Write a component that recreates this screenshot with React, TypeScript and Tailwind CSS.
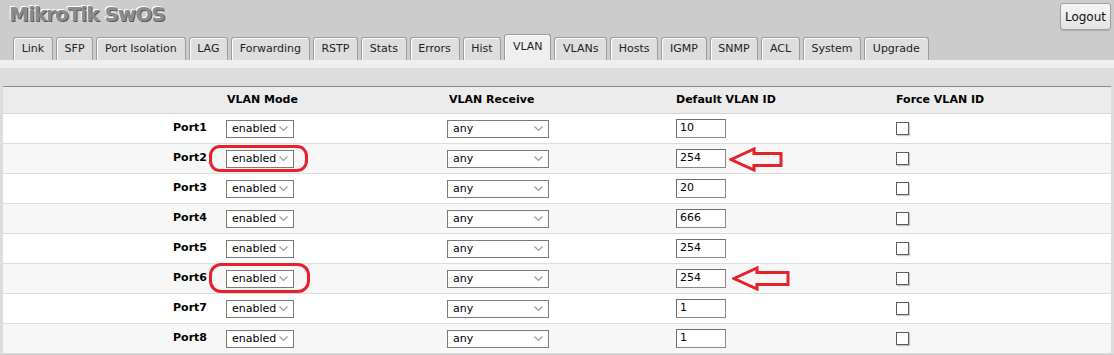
const tabs = [
  "Link",
  "SFP",
  "Port Isolation",
  "LAG",
  "Forwarding",
  "RSTP",
  "Stats",
  "Errors",
  "Hist",
  "VLAN",
  "VLANs",
  "Hosts",
  "IGMP",
  "SNMP",
  "ACL",
  "System",
  "Upgrade",
];

const ports = [
  { name: "Port1", vid: "10" },
  { name: "Port2", vid: "254", mark: "a" },
  { name: "Port3", vid: "20" },
  { name: "Port4", vid: "666" },
  { name: "Port5", vid: "254" },
  { name: "Port6", vid: "254", mark: "b" },
  { name: "Port7", vid: "1" },
  { name: "Port8", vid: "1" },
];

const Chevron = () => (
  <svg width="9" height="5" viewBox="0 0 9 5" className="shrink-0">
    <path d="M0.5 0.5 L4.5 4.5 L8.5 0.5" fill="none" stroke="#9a9a9a" strokeWidth="1.1" />
  </svg>
);

const FakeSelect = ({ value, width }: { value: string; width: string }) => (
  <div
    className={`${width} h-[18px] flex items-center justify-between border border-[#7a7a7a] bg-white pl-[5px] pr-[5px] text-[11px] text-black`}
  >
    <span className="leading-none">{value}</span>
    <Chevron />
  </div>
);

const Arrow = ({ w, h }: { w: number; h: number }) => {
  const mid = h / 2;
  const head = 25;
  return (
    <svg width={w} height={h} viewBox={`0 0 ${w} ${h}`}>
      <polygon
        points={`2,${mid} ${head},2 ${head},${mid - 6} ${w - 2},${mid - 6} ${w - 2},${mid + 6} ${head},${mid + 6} ${head},${h - 2}`}
        fill="none"
        stroke="#e8202a"
        strokeWidth="3"
        strokeLinejoin="miter"
      />
    </svg>
  );
};

export default function App() {
  return (
    <div className="min-h-screen bg-[#cccccc] font-['DejaVu_Sans',sans-serif] text-black">
      <div className="flex justify-between h-[34px] pl-[9px] pr-[3px] pt-[3px]">
        <div className="text-[20px] font-bold tracking-[-1px] leading-[22px] text-[#8c8c8c] [text-shadow:1px_1px_0_#5a5a5a,-1px_-1px_0_#ffffff]">
          MikroTik SwOS
        </div>
        <button className="h-[27px] px-[4px] border border-[#a0a0a0] rounded-[3px] bg-gradient-to-b from-[#f6f6f6] to-[#e2e2e2] text-[12px] text-[#111] shadow-[0_1px_1px_rgba(0,0,0,0.15)]">
          Logout
        </button>
      </div>

      <div className="flex items-end gap-[3px] pl-[13px] h-[26px]">
        {tabs.map((t) => {
          const active = t === "VLAN";
          return (
            <div
              key={t}
              className={`flex items-center px-[7.7px] border border-b-0 border-[#9c9c9c] rounded-t-[3px] shadow-[inset_1px_1px_0_#ffffff] text-[11px] text-[#222] ${
                active ? "h-[26px] bg-[#efefef]" : "h-[23px] bg-[#dedede]"
              }`}
            >
              {t}
            </div>
          );
        })}
      </div>

      <div className="h-[8px] bg-[#efefef]" />
      <div className="h-[18px] bg-[#dcdcdc]" />

      <div className="bg-[#dcdcdc] px-[3px]">
        <div className="border-t border-[#888888]">
          <div className="grid grid-cols-[219px_221px_229px_220px_1fr] h-[27px] items-center bg-[#ececec] border-b border-[#d6d6d6] text-[11px] font-bold">
            <div />
            <div className="pl-[5px]">VLAN Mode</div>
            <div className="pl-[6px]">VLAN Receive</div>
            <div className="pl-[4px]">Default VLAN ID</div>
            <div className="pl-[4px]">Force VLAN ID</div>
          </div>

          {ports.map((p, i) => (
            <div
              key={p.name}
              className={`relative grid grid-cols-[219px_221px_229px_220px_1fr] h-[30px] items-center border-b border-[#dcdcdc] ${
                i % 2 === 0 ? "bg-white" : "bg-[#f7f7f7]"
              }`}
            >
              <div className="text-right pr-[15px] text-[11px] font-bold">{p.name}</div>
              <div className="pl-[4px]">
                <FakeSelect value="enabled" width="w-[68px]" />
              </div>
              <div className="pl-[4px]">
                <FakeSelect value="any" width="w-[102px]" />
              </div>
              <div className="pl-[4px]">
                <div className="w-[50px] h-[19px] flex items-center bg-white border border-[#8a8a8a] border-t-[#6e6e6e] border-l-[#6e6e6e] pl-[3px] text-[11px]">
                  {p.vid}
                </div>
              </div>
              <div className="pl-[4px]">
                <div className="w-[13px] h-[13px] bg-white border border-[#5c5c5c] shadow-[1px_1px_1px_rgba(0,0,0,0.2)]" />
              </div>

              {p.mark === "a" && (
                <>
                  <div className="absolute left-[206px] top-[1px] w-[99px] h-[27px] border-[3px] border-[#e8202a] rounded-[11px]" />
                  <div className="absolute left-[726px] top-[3px]">
                    <Arrow w={54} h={25} />
                  </div>
                </>
              )}
              {p.mark === "b" && (
                <>
                  <div className="absolute left-[206px] top-[-1px] w-[101px] h-[30px] border-[3px] border-[#e8202a] rounded-[12px]" />
                  <div className="absolute left-[729px] top-[2px]">
                    <Arrow w={58} h={25} />
                  </div>
                </>
              )}
            </div>
          ))}
        </div>
      </div>
    </div>
  );
}
